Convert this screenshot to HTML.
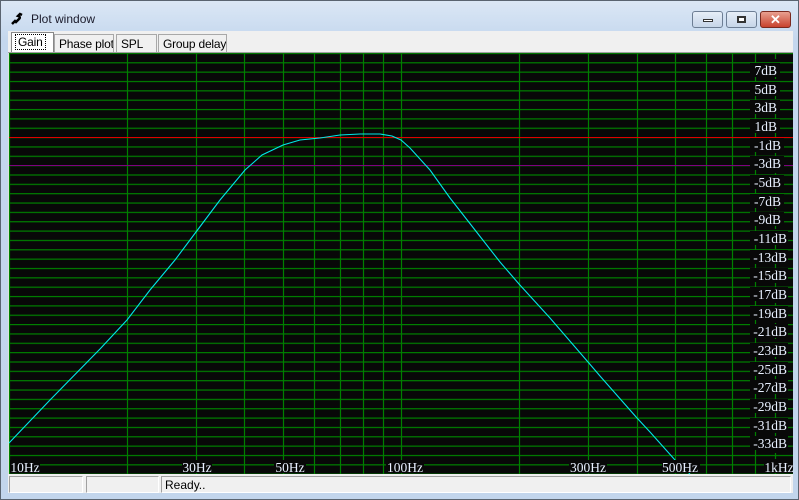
<!DOCTYPE html>
<html><head><meta charset="utf-8"><style>
*{margin:0;padding:0;box-sizing:border-box}
body{width:799px;height:500px;overflow:hidden;background:#c2d5ec;font-family:"Liberation Sans",sans-serif;position:relative}
.frame{position:absolute;left:0;top:0;width:799px;height:500px;border:1px solid #5a6470;background:linear-gradient(#dbe7f5,#c4d7ee 40px,#c2d5ec)}
.title{position:absolute;left:31px;top:12px;font-size:12px;color:#1a1a2a}
.client{position:absolute;left:8px;top:31px;width:785px;height:462px;background:#f0f0f0}
.tab{position:absolute;top:3px;height:18px;background:#f0f0f0;border:1px solid #a8a8a8;border-bottom:none;font-size:12px;padding:2px 0 0 4px;color:#000;white-space:nowrap;overflow:hidden;letter-spacing:-0.2px}
.btn{position:absolute;top:11px;height:17px;border:1px solid #6d7e94;border-radius:3px;background:linear-gradient(#e6eef8,#c6d5e8)}
.sb{position:absolute;top:445px;height:17px;border:1px solid #a0a0a0;border-right-color:#fff;border-bottom-color:#fff;font-size:12px;padding:1px 3px;background:#f0f0f0}
</style></head><body>
<div class="frame"></div>
<svg style="position:absolute;left:10px;top:12px" width="16" height="14" viewBox="0 0 16 14"><path d="M2 12 L5 9 L6 10 L9 7 Q11 5 8 4 L10 2 L12 3" stroke="#000" stroke-width="2.5" fill="none"/></svg>
<div class="title">Plot window</div>
<div class="btn" style="left:692px;width:31px"><div style="position:absolute;left:10px;top:7px;width:10px;height:3px;background:#fff;border:1px solid #333"></div></div>
<div class="btn" style="left:726px;width:31px"><div style="position:absolute;left:10px;top:4px;width:9px;height:7px;border:2px solid #333;background:#fff"></div></div>
<div class="btn" style="left:760px;width:31px;background:linear-gradient(#e8a090,#c8422e);border-color:#7a2a20"><div style="position:absolute;left:0;top:0;width:29px;height:15px;color:#fff;font-weight:bold;font-size:13px;text-align:center;line-height:15px">✕</div></div>
<div class="client">
<div class="tab" style="left:3px;top:1px;height:20px;width:43px;border-color:#888;background:#fff;padding-left:4px"><span style="outline:1px dotted #000;padding:0 2px">Gain</span></div>
<div class="tab" style="left:46px;width:60px">Phase plot</div>
<div class="tab" style="left:108px;width:41px">SPL</div>
<div class="tab" style="left:150px;width:69px">Group delay</div>
<div style="position:absolute;left:0;top:21px;width:785px;height:1px;background:#a0a0a0"></div>
<div class="sb" style="left:1px;width:74px"></div>
<div class="sb" style="left:78px;width:73px"></div>
<div class="sb" style="left:153px;width:630px">Ready..</div>
</div>
<svg style="position:absolute;left:0;top:0" width="799" height="500">
<defs><pattern id="h" x="0" y="15.45" width="800" height="9.35" patternUnits="userSpaceOnUse"><rect x="0" y="0" width="800" height="1.2" fill="#008000"/></pattern></defs>
<rect x="9" y="53" width="784" height="421" fill="#080808"/>
<rect x="9" y="53" width="784" height="421" fill="url(#h)"/>
<g stroke="#008000" stroke-width="1.2">
<line x1="9.5" y1="53" x2="9.5" y2="474"/><line x1="127.5" y1="53" x2="127.5" y2="474"/><line x1="196.5" y1="53" x2="196.5" y2="474"/><line x1="244.5" y1="53" x2="244.5" y2="474"/><line x1="283.5" y1="53" x2="283.5" y2="474"/><line x1="314.5" y1="53" x2="314.5" y2="474"/><line x1="340.5" y1="53" x2="340.5" y2="474"/><line x1="363.5" y1="53" x2="363.5" y2="474"/><line x1="383.5" y1="53" x2="383.5" y2="474"/><line x1="401.5" y1="53" x2="401.5" y2="474"/><line x1="519.5" y1="53" x2="519.5" y2="474"/><line x1="588.5" y1="53" x2="588.5" y2="474"/><line x1="637.5" y1="53" x2="637.5" y2="474"/><line x1="675.5" y1="53" x2="675.5" y2="474"/><line x1="706.5" y1="53" x2="706.5" y2="474"/><line x1="732.5" y1="53" x2="732.5" y2="474"/><line x1="755.5" y1="53" x2="755.5" y2="474"/><line x1="775.5" y1="53" x2="775.5" y2="474" stroke-dasharray="6 4"/>
</g>
<line x1="9" y1="137.5" x2="793" y2="137.5" stroke="#e00000" stroke-width="1"/>
<line x1="9" y1="165.5" x2="793" y2="165.5" stroke="#800080" stroke-width="1"/>
<polyline fill="none" stroke="#00e8e8" stroke-width="1.1" points="9,443 50,400 100,349 127,320 150,290 175,260 196,232 220,200 245,170 262,155 283,145 300,140 320,138 340,135 360,134 380,134 392,136 401,140 410,148 430,170 450,198 475,230 500,262 519,284 550,318 588,362 600,376 637,418 650,432 675,460 690,474"/>
<g font-family="Liberation Serif,serif" font-size="13.5" fill="#e8f0ff" text-anchor="end">
<g fill="#080808"><rect x="750" y="63" width="30" height="14"/><rect x="750" y="82" width="30" height="14"/><rect x="750" y="100" width="30" height="14"/><rect x="750" y="119" width="30" height="14"/><rect x="750" y="138" width="34" height="14"/><rect x="750" y="156" width="34" height="14"/><rect x="750" y="175" width="34" height="14"/><rect x="750" y="194" width="34" height="14"/><rect x="750" y="212" width="34" height="14"/><rect x="750" y="231" width="38" height="14"/><rect x="750" y="250" width="38" height="14"/><rect x="750" y="268" width="38" height="14"/><rect x="750" y="287" width="38" height="14"/><rect x="750" y="306" width="38" height="14"/><rect x="750" y="324" width="38" height="14"/><rect x="750" y="343" width="38" height="14"/><rect x="750" y="362" width="38" height="14"/><rect x="750" y="380" width="38" height="14"/><rect x="750" y="399" width="38" height="14"/><rect x="750" y="418" width="38" height="14"/><rect x="750" y="436" width="38" height="14"/></g>
<text x="777" y="75">7dB</text><text x="777" y="94">5dB</text><text x="777" y="112">3dB</text><text x="777" y="131">1dB</text><text x="781" y="150">-1dB</text><text x="781" y="168">-3dB</text><text x="781" y="187">-5dB</text><text x="781" y="206">-7dB</text><text x="781" y="224">-9dB</text><text x="787" y="243">-11dB</text><text x="787" y="262">-13dB</text><text x="787" y="280">-15dB</text><text x="787" y="299">-17dB</text><text x="787" y="318">-19dB</text><text x="787" y="336">-21dB</text><text x="787" y="355">-23dB</text><text x="787" y="374">-25dB</text><text x="787" y="392">-27dB</text><text x="787" y="411">-29dB</text><text x="787" y="430">-31dB</text><text x="787" y="448">-33dB</text>
</g>
<g font-family="Liberation Serif,serif" font-size="13.5" fill="#e8f0ff" text-anchor="middle">
<rect x="10" y="460" width="30" height="13" fill="#080808"/><text x="25" y="472">10Hz</text>
<rect x="182" y="460" width="30" height="13" fill="#080808"/><text x="197" y="472">30Hz</text>
<rect x="274" y="460" width="32" height="13" fill="#080808"/><text x="290" y="472">50Hz</text>
<rect x="386" y="460" width="38" height="13" fill="#080808"/><text x="405" y="472">100Hz</text>
<rect x="569" y="460" width="38" height="13" fill="#080808"/><text x="588" y="472">300Hz</text>
<rect x="662" y="460" width="38" height="13" fill="#080808"/><text x="680" y="472">500Hz</text>
<rect x="764" y="460" width="29" height="13" fill="#080808"/><text x="779" y="472">1kHz</text>
</g>
</svg>
</body></html>
